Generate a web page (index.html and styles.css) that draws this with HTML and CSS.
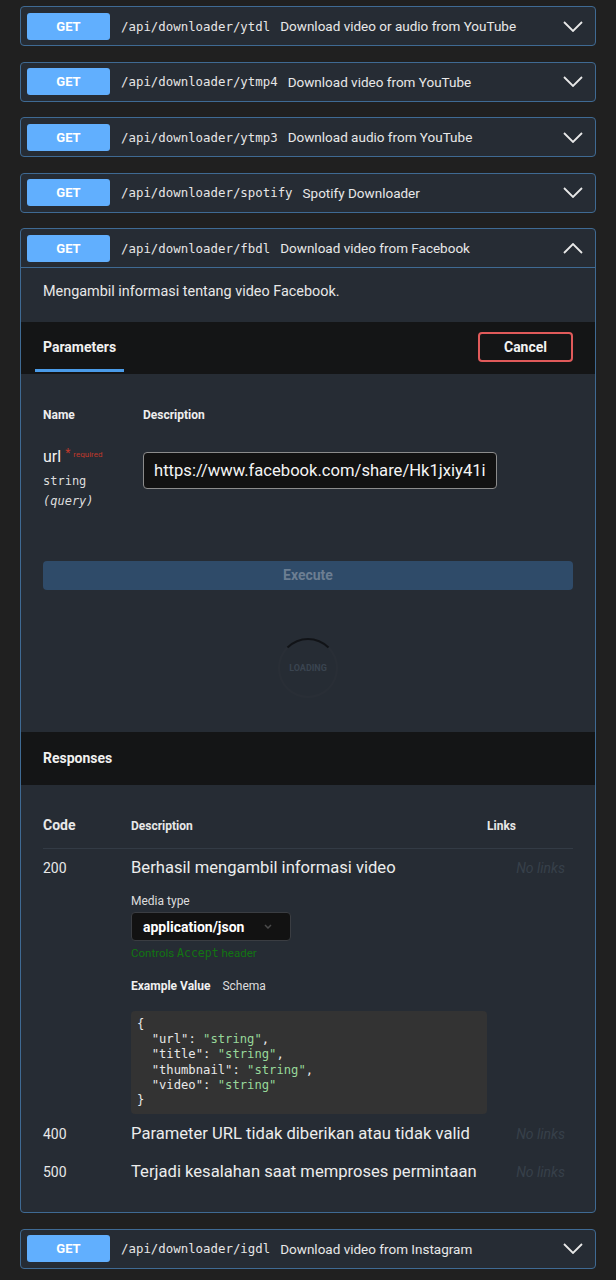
FILE: index.html
```html
<!DOCTYPE html>
<html lang="id">
<head>
<meta charset="utf-8">
<title>API Downloader</title>
<link rel="stylesheet" href="styles.css">
</head>
<body>
<div class="wrap">
  <div class="opblock">
    <div class="summary">
      <span class="method">GET</span>
      <span class="path">/api/downloader/ytdl</span>
      <span class="summary-desc">Download video or audio from YouTube</span>
      <svg class="arrow" viewBox="0 0 20 11" width="20" height="11"><polyline points="1,1 10,10 19,1"/></svg>
    </div>
  </div>
  <div class="opblock">
    <div class="summary">
      <span class="method">GET</span>
      <span class="path">/api/downloader/ytmp4</span>
      <span class="summary-desc">Download video from YouTube</span>
      <svg class="arrow" viewBox="0 0 20 11" width="20" height="11"><polyline points="1,1 10,10 19,1"/></svg>
    </div>
  </div>
  <div class="opblock">
    <div class="summary">
      <span class="method">GET</span>
      <span class="path">/api/downloader/ytmp3</span>
      <span class="summary-desc">Download audio from YouTube</span>
      <svg class="arrow" viewBox="0 0 20 11" width="20" height="11"><polyline points="1,1 10,10 19,1"/></svg>
    </div>
  </div>
  <div class="opblock">
    <div class="summary">
      <span class="method">GET</span>
      <span class="path">/api/downloader/spotify</span>
      <span class="summary-desc">Spotify Downloader</span>
      <svg class="arrow" viewBox="0 0 20 11" width="20" height="11"><polyline points="1,1 10,10 19,1"/></svg>
    </div>
  </div>

  <div class="opblock open">
    <div class="summary">
      <span class="method">GET</span>
      <span class="path">/api/downloader/fbdl</span>
      <span class="summary-desc">Download video from Facebook</span>
      <svg class="arrow" viewBox="0 0 20 11" width="20" height="11"><polyline points="1,10 10,1 19,10"/></svg>
    </div>
    <div class="op-desc">Mengambil informasi tentang video Facebook.</div>

    <div class="section-head">
      <div class="tab">
        <span class="tab-label">Parameters</span>
        <span class="tab-line"></span>
      </div>
      <button class="cancel">Cancel</button>
    </div>

    <div class="params">
      <div class="param-head">
        <span class="col-name">Name</span>
        <span class="col-desc">Description</span>
      </div>
      <div class="param-row">
        <div class="col-name">
          <div class="pname">url<span class="req"><span class="star">*</span>required</span></div>
          <div class="ptype">string</div>
          <div class="pin">(query)</div>
        </div>
        <div class="col-desc">
          <div class="input">https://www.facebook.com/share/Hk1jxiy41i</div>
        </div>
      </div>
      <div class="execute">Execute</div>
      <div class="loading"><span class="spinner"></span><span class="loading-text">LOADING</span></div>
    </div>

    <div class="section-head resp-head">
      <span class="tab-label">Responses</span>
    </div>

    <div class="responses">
      <div class="rt-head">
        <span class="c-code">Code</span>
        <span class="c-desc">Description</span>
        <span class="c-links">Links</span>
      </div>
      <div class="rt-row first">
        <span class="c-code code-num">200</span>
        <div class="c-desc">
          <div class="rdesc">Berhasil mengambil informasi video</div>
          <div class="media-label">Media type</div>
          <div class="select"><span>application/json</span><svg viewBox="0 0 8 5" width="8" height="5"><polyline points="1,1 4,4 7,1"/></svg></div>
          <div class="controls">Controls <span class="mono">Accept</span> header</div>
          <div class="ex-tabs"><span class="ex-active">Example Value</span><span class="ex-schema">Schema</span></div>
          <pre class="example">{
  <span class="k">"url"</span>: <span class="s">"string"</span>,
  <span class="k">"title"</span>: <span class="s">"string"</span>,
  <span class="k">"thumbnail"</span>: <span class="s">"string"</span>,
  <span class="k">"video"</span>: <span class="s">"string"</span>
}</pre>
        </div>
        <span class="c-links nolinks">No links</span>
      </div>
      <div class="rt-row">
        <span class="c-code code-num">400</span>
        <div class="c-desc"><div class="rdesc">Parameter URL tidak diberikan atau tidak valid</div></div>
        <span class="c-links nolinks">No links</span>
      </div>
      <div class="rt-row">
        <span class="c-code code-num">500</span>
        <div class="c-desc"><div class="rdesc">Terjadi kesalahan saat memproses permintaan</div></div>
        <span class="c-links nolinks">No links</span>
      </div>
    </div>
  </div>

  <div class="opblock">
    <div class="summary">
      <span class="method">GET</span>
      <span class="path">/api/downloader/igdl</span>
      <span class="summary-desc">Download video from Instagram</span>
      <svg class="arrow" viewBox="0 0 20 11" width="20" height="11"><polyline points="1,1 10,10 19,1"/></svg>
    </div>
  </div>
</div>
</body>
</html>
```
FILE: styles.css
```css
* { box-sizing: border-box; }
body {
  margin: 0;
  background: #202020;
  font-family: Roboto, "Noto Sans", sans-serif;
  color: #e8e8e8;
}
.wrap {
  padding: 6px 20px 12px;
  display: flex;
  flex-direction: column;
  gap: 15.5px;
}
.opblock {
  border: 1px solid #3f6a93;
  border-radius: 4px;
  background: #262c34;
}
.summary {
  display: flex;
  align-items: center;
  height: 38px;
  padding: 0 12px 0 6px;
}
.open .summary { border-bottom: 1px solid #3f6a93; height: 39px; }
.method {
  width: 83px;
  height: 27px;
  line-height: 27px;
  border-radius: 3px;
  background: #61affe;
  color: #fff;
  font-weight: 700;
  font-size: 13px;
  text-align: center;
  flex: none;
}
.path {
  font-family: "DejaVu Sans Mono", monospace;
  font-size: 12.4px;
  color: #e6e6e6;
  margin-left: 11px;
  padding-right: 10px;
}
.summary-desc {
  font-size: 13.5px;
  color: #e8e8e8;
}
.arrow {
  margin-left: auto;
  fill: none;
  stroke: #e8e8e8;
  stroke-width: 1.8;
}
.op-desc {
  font-size: 14.4px;
  line-height: 20px;
  padding: 14px 22px 20px;
  color: #e8e8e8;
}
.section-head {
  background: #141516;
  height: 52px;
  display: flex;
  align-items: flex-start;
  justify-content: space-between;
  padding: 0 22px 0 14px;
}
.tab {
  display: flex;
  flex-direction: column;
  padding-top: 15px;
}
.tab-label {
  font-size: 14px;
  font-weight: 700;
  line-height: 20px;
  color: #f0f0f0;
  padding: 0 8px;
}
.tab-line {
  margin-top: 12px;
  height: 3px;
  background: #4a9be8;
}
.cancel {
  margin-top: 10px;
  width: 95px;
  height: 30px;
  border: 2px solid #e05a5a;
  border-radius: 4px;
  background: transparent;
  color: #f2f2f2;
  font-family: Roboto, sans-serif;
  font-weight: 700;
  font-size: 14px;
}
.params { padding: 33px 22px 34px; }
.param-head {
  display: flex;
  font-size: 12px;
  font-weight: 700;
  line-height: 16px;
  color: #eee;
}
.col-name { width: 100px; flex: none; }
.param-row {
  display: flex;
  margin-top: 20px;
}
.pname {
  font-size: 16px;
  line-height: 20px;
  color: #f0f0f0;
}
.req {
  font-size: 8px;
  color: #c0392b;
  vertical-align: 5px;
  margin-left: 4px;
}
.star { font-size: 12px; margin-right: 3px; }
.ptype {
  font-family: "DejaVu Sans Mono", monospace;
  font-size: 12px;
  line-height: 16px;
  margin-top: 6px;
  color: #ddd;
}
.pin {
  font-family: "DejaVu Sans Mono", monospace;
  font-size: 12px;
  font-style: italic;
  line-height: 16px;
  margin-top: 4px;
  color: #ddd;
}
.input {
  margin-top: 9px;
  width: 354px;
  height: 37px;
  background: #121212;
  border: 1px solid #8c8c8c;
  border-radius: 4px;
  font-size: 16.6px;
  line-height: 35px;
  padding: 0 10px;
  color: #f5f5f5;
  white-space: nowrap;
  overflow: hidden;
}
.execute {
  margin-top: 52px;
  height: 29px;
  border-radius: 4px;
  background: #2f4b69;
  color: #6c7e92;
  font-size: 14px;
  font-weight: 700;
  line-height: 29px;
  text-align: center;
}
.loading {
  margin: 48px auto 0;
  width: 60px;
  height: 60px;
  display: flex;
  align-items: center;
  justify-content: center;
  position: relative;
}
.spinner {
  position: absolute;
  inset: 0;
  border-radius: 50%;
  border: 2px solid rgba(85, 85, 85, 0.08);
  border-top-color: rgba(0, 0, 0, 0.55);
}
.loading-text {
  font-size: 9px;
  font-weight: 700;
  color: #3a4450;
}
.resp-head { padding: 26px 22px 0; height: 53px; }
.resp-head .tab-label { padding: 0; line-height: 0; margin-top: 0; }
.responses { padding: 30px 22px 21px; }
.rt-head {
  display: flex;
  align-items: baseline;
  line-height: 20px;
  padding-bottom: 12px;
  border-bottom: 1px solid #333b45;
}
.c-code { width: 88px; flex: none; }
.c-desc { width: 356px; flex: none; }
.c-links { flex: 1; }
.rt-head .c-code { font-size: 14px; font-weight: 700; }
.rt-head .c-desc, .rt-head .c-links { font-size: 12px; font-weight: 700; }
.rt-row {
  display: flex;
  align-items: flex-start;
  padding: 9px 0;
}
.rt-row.first { padding-bottom: 1px; }
.code-num { font-size: 14px; line-height: 20px; }
.rdesc { font-size: 16.6px; line-height: 20px; color: #ececec; }
.nolinks {
  font-size: 14px;
  font-style: italic;
  line-height: 20px;
  color: #37404a;
  text-align: right;
  padding-right: 8px;
}
.media-label {
  margin-top: 15px;
  font-size: 12px;
  line-height: 16px;
  color: #ddd;
}
.select {
  margin-top: 3px;
  width: 160px;
  height: 29px;
  background: #121212;
  border: 1px solid #3a3d42;
  border-radius: 4px;
  display: flex;
  align-items: center;
  justify-content: space-between;
  padding: 0 18px 0 11px;
  font-size: 14px;
  font-weight: 700;
  color: #fff;
}
.select svg { fill: none; stroke: #4a4a4a; stroke-width: 1.5; }
.controls {
  margin-top: 5px;
  font-size: 11.5px;
  line-height: 14px;
  color: #127512;
}
.mono { font-family: "DejaVu Sans Mono", monospace; }
.ex-tabs {
  margin-top: 18px;
  font-size: 12px;
  line-height: 16px;
  display: flex;
  gap: 12px;
}
.ex-active { font-weight: 700; color: #f0f0f0; }
.ex-schema { color: #ddd; }
.example {
  margin: 17px 0 0;
  background: #333333;
  border-radius: 4px;
  padding: 6px;
  font-family: "DejaVu Sans Mono", monospace;
  font-size: 12.2px;
  line-height: 15.2px;
  color: #e8e8e8;
  height: 103px;
}
.example .s { color: #98d89a; }
.example .k { color: #e8e8e8; }
```
